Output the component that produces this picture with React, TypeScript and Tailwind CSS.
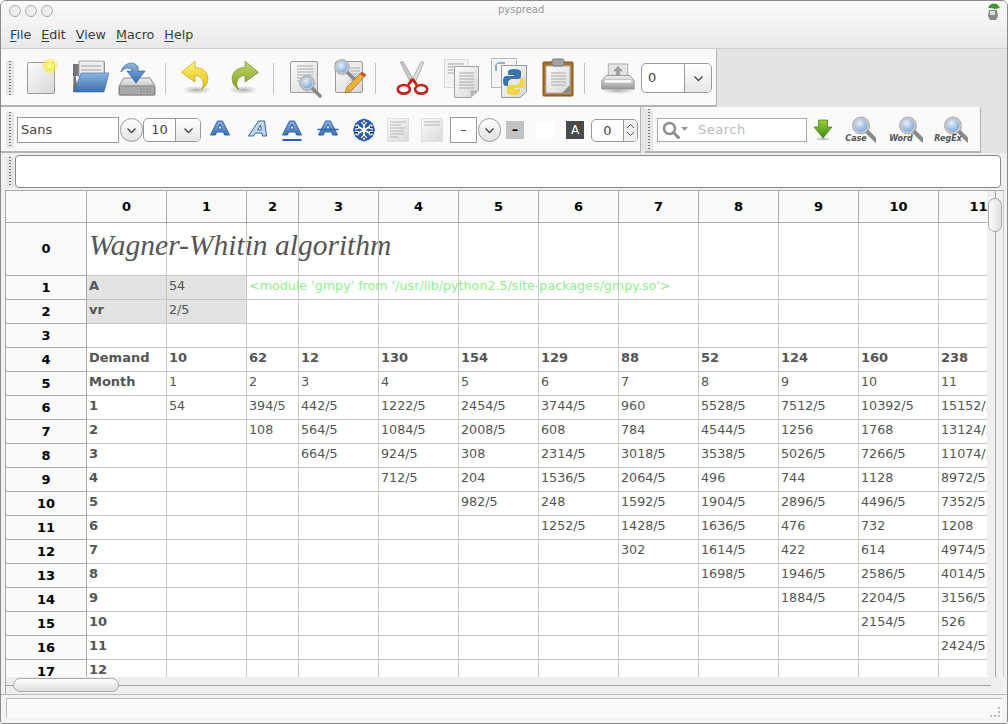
import React from "react";

const colWidths = [80, 80, 52, 80, 80, 80, 80, 80, 80, 80, 80, 80];

const rows: { h: string; cells: string[]; bold?: boolean }[] = [
  { h: "1", cells: ["A", "54", "<module 'gmpy' from '/usr/lib/python2.5/site-packages/gmpy.so'>"] },
  { h: "2", cells: ["vr", "2/5"] },
  { h: "3", cells: [] },
  { h: "4", bold: true, cells: ["Demand", "10", "62", "12", "130", "154", "129", "88", "52", "124", "160", "238"] },
  { h: "5", cells: ["Month", "1", "2", "3", "4", "5", "6", "7", "8", "9", "10", "11"] },
  { h: "6", cells: ["1", "54", "394/5", "442/5", "1222/5", "2454/5", "3744/5", "960", "5528/5", "7512/5", "10392/5", "15152/5"] },
  { h: "7", cells: ["2", "", "108", "564/5", "1084/5", "2008/5", "608", "784", "4544/5", "1256", "1768", "13124/5"] },
  { h: "8", cells: ["3", "", "", "664/5", "924/5", "308", "2314/5", "3018/5", "3538/5", "5026/5", "7266/5", "11074/5"] },
  { h: "9", cells: ["4", "", "", "", "712/5", "204", "1536/5", "2064/5", "496", "744", "1128", "8972/5"] },
  { h: "10", cells: ["5", "", "", "", "", "982/5", "248", "1592/5", "1904/5", "2896/5", "4496/5", "7352/5"] },
  { h: "11", cells: ["6", "", "", "", "", "", "1252/5", "1428/5", "1636/5", "476", "732", "1208"] },
  { h: "12", cells: ["7", "", "", "", "", "", "", "302", "1614/5", "422", "614", "4974/5"] },
  { h: "13", cells: ["8", "", "", "", "", "", "", "", "1698/5", "1946/5", "2586/5", "4014/5"] },
  { h: "14", cells: ["9", "", "", "", "", "", "", "", "", "1884/5", "2204/5", "3156/5"] },
  { h: "15", cells: ["10", "", "", "", "", "", "", "", "", "", "2154/5", "526"] },
  { h: "16", cells: ["11", "", "", "", "", "", "", "", "", "", "", "2424/5"] },
  { h: "17", cells: ["12"] },
];

function Defs() {
  return (
    <svg width="0" height="0" className="absolute">
      <defs>
        <linearGradient id="page" x1="0" y1="0" x2="1" y2="1">
          <stop offset="0" stopColor="#fbfbfb" />
          <stop offset="1" stopColor="#d8d8d8" />
        </linearGradient>
        <linearGradient id="blue" x1="0" y1="0" x2="0" y2="1">
          <stop offset="0" stopColor="#8db5e0" />
          <stop offset="1" stopColor="#3b6fb0" />
        </linearGradient>
        <linearGradient id="yellow" x1="0" y1="0" x2="0" y2="1">
          <stop offset="0" stopColor="#fff27a" />
          <stop offset="1" stopColor="#e3bf08" />
        </linearGradient>
        <linearGradient id="green" x1="0" y1="0" x2="0" y2="1">
          <stop offset="0" stopColor="#c4d868" />
          <stop offset="1" stopColor="#7f9f20" />
        </linearGradient>
        <linearGradient id="grey" x1="0" y1="0" x2="0" y2="1">
          <stop offset="0" stopColor="#f0f0f0" />
          <stop offset="1" stopColor="#9a9a9a" />
        </linearGradient>
        <linearGradient id="arrowg" x1="0" y1="0" x2="0" y2="1">
          <stop offset="0" stopColor="#9ad03c" />
          <stop offset="1" stopColor="#3f8a10" />
        </linearGradient>
        <radialGradient id="glow">
          <stop offset="0" stopColor="#fffde0" />
          <stop offset="0.4" stopColor="#fbf050" />
          <stop offset="1" stopColor="#f5e860" stopOpacity="0.3" />
        </radialGradient>
        <radialGradient id="lens" cx="0.4" cy="0.35">
          <stop offset="0" stopColor="#e6f0fb" />
          <stop offset="1" stopColor="#8fb4e0" />
        </radialGradient>
        <radialGradient id="shadow">
          <stop offset="0" stopColor="#000" stopOpacity="0.3" />
          <stop offset="1" stopColor="#000" stopOpacity="0" />
        </radialGradient>
      </defs>
    </svg>
  );
}

function Glass({ x, y, r }: { x: number; y: number; r: number }) {
  return (
    <g>
      <line x1={x + r * 0.7} y1={y + r * 0.7} x2={x + r * 2} y2={y + r * 2} stroke="#8a8a8a" strokeWidth={r * 0.55} strokeLinecap="round" />
      <circle cx={x} cy={y} r={r} fill="url(#lens)" stroke="#c8c8c8" strokeWidth={r * 0.28} />
      <circle cx={x} cy={y} r={r * 1.14} fill="none" stroke="#7d7d7d" strokeWidth="0.5" />
    </g>
  );
}

function Lines({ x, y, w, n, gap = 3 }: { x: number; y: number; w: number; n: number; gap?: number }) {
  return (
    <g stroke="#c0c0c0" strokeWidth="1.4">
      {Array.from({ length: n }).map((_, i) => (
        <line key={i} x1={x} x2={x + w} y1={y + i * gap} y2={y + i * gap} />
      ))}
    </g>
  );
}

const NewIcon = () => (
  <svg width="40" height="40" viewBox="0 0 40 40">
    <rect x="7.5" y="4.5" width="27" height="31" rx="1.5" fill="url(#page)" stroke="#9a9a9a" />
    <circle cx="30" cy="8" r="8" fill="url(#glow)" />
  </svg>
);

const OpenIcon = () => (
  <svg width="40" height="40" viewBox="0 0 40 40">
    <path d="M4 6h6l2-2h24v14H4z" fill="#77797a" />
    <path d="M10 3h25v16H10z" fill="#ededed" stroke="#a8a8a8" />
    <path d="M12 8h20M12 12h20" stroke="#bbb" strokeWidth="1.5" />
    <path d="M5 8l4 26h-5z" fill="#6d6f70" />
    <path d="M12 15h28l-5 19H5z" fill="url(#blue)" stroke="#3a6ba5" strokeWidth="0.6" />
  </svg>
);

const SaveIcon = () => (
  <svg width="40" height="40" viewBox="0 0 40 40">
    <path d="M7 20h26l5 8v9H2v-9z" fill="url(#grey)" stroke="#8b8b8b" />
    <rect x="2.5" y="28" width="35" height="9" rx="1.5" fill="#a9a9a9" stroke="#858585" />
    <path d="M24 30v5M27 30v5M30 30v5M33 30v5" stroke="#8a8a8a" />
    <path d="M4 14c2-9 13-12 17-5v4h7l-9 12-9-12h6c-2-4-9-4-12 1z" fill="url(#blue)" stroke="#2f5f9e" strokeWidth="0.7" />
  </svg>
);

const UndoIcon = () => (
  <svg width="32" height="36" viewBox="0 0 40 44">
    <ellipse cx="22" cy="37" rx="18" ry="5" fill="url(#shadow)" />
    <path d="M3 15L20 1v8c10 0 16 6 16 14 0 6-3 10-8 13 2-3 3-6 2-9-1-5-5-8-10-8v8z" fill="url(#yellow)" stroke="#b89c08" strokeWidth="0.8" strokeLinejoin="round" />
  </svg>
);

const RedoIcon = () => (
  <svg width="32" height="36" viewBox="0 0 40 44">
    <ellipse cx="18" cy="37" rx="18" ry="5" fill="url(#shadow)" />
    <path d="M37 15L20 1v8C10 9 4 15 4 23c0 6 3 10 8 13-2-3-3-6-2-9 1-5 5-8 10-8v8z" fill="url(#green)" stroke="#6d8a1a" strokeWidth="0.8" strokeLinejoin="round" />
  </svg>
);

const PreviewIcon = () => (
  <svg width="40" height="40" viewBox="0 0 40 40">
    <rect x="4.5" y="3.5" width="27" height="31" rx="1.5" fill="url(#page)" stroke="#9a9a9a" />
    <Lines x={11} y={8} w={16} n={6} />
    <Glass x={21} y={25} r={6.5} />
  </svg>
);

const EditIcon = () => (
  <svg width="40" height="40" viewBox="0 0 40 40">
    <rect x="5.5" y="3.5" width="27" height="31" rx="1.5" fill="url(#page)" stroke="#9a9a9a" />
    <Lines x={20} y={10} w={10} n={5} />
    <g transform="translate(-5 -1)">
      <Glass x={17} y={10} r={6.5} />
    </g>
    <path d="M32 14l4 3-15 16-6 2 2-6z" fill="#eab13c" stroke="#96661a" strokeWidth="0.7" />
    <path d="M32 14l4 3-2 2-4-3z" fill="#d9483b" />
  </svg>
);

const CutIcon = () => (
  <svg width="33" height="36" viewBox="0 0 38 40">
    <path d="M5 2l3-1 13 22-4 3z" fill="#c9c9c9" stroke="#8c8c8c" strokeWidth="0.7" />
    <path d="M29 1l3 1-10 24-4-3z" fill="#dedede" stroke="#8c8c8c" strokeWidth="0.7" />
    <g fill="none" stroke="#c4201c" strokeWidth="3">
      <ellipse cx="9" cy="33" rx="7" ry="5" />
      <ellipse cx="29" cy="33" rx="7" ry="5" />
      <path d="M14 28l5-7M24 28l-5-7" />
    </g>
  </svg>
);

const CopyIcon = () => (
  <svg width="40" height="40" viewBox="0 0 40 40">
    <rect x="3.500" y="1.500" width="24" height="28" fill="#f2f2f2" stroke="#dcdcdc" />
    <Lines x={7} y={6} w={16} n={4} />
    <path d="M13.500 8.500h24v24l-8 7h-16z" fill="url(#page)" stroke="#a0a0a0" />
    <Lines x={18} y={15} w={15} n={6} />
    <path d="M29.500 39.500v-7h8z" fill="#b8b8b8" />
  </svg>
);

const PythonIcon = () => (
  <svg width="40" height="40" viewBox="0 0 40 40">
    <rect x="1.500" y="0.500" width="25" height="29" fill="#f5f5f5" stroke="#b9b9b9" />
    <path d="M8 4h7v2h-8v7H5V7z" fill="#8fb0cc" />
    <path d="M11.500 7.500h25v26l-6 6h-19z" fill="url(#page)" stroke="#9a9a9a" />
    <path d="M24 11c-4 0-6 1-6 3v3h6v1h-8c-2 0-3 2-3 5s1 5 3 5h2v-3c0-2 2-4 4-4h6c2 0 3-1 3-3v-4c0-2-3-3-7-3z" fill="#3a76ad" />
    <path d="M24 37c4 0 6-1 6-3v-3h-6v-1h8c2 0 3-2 3-5s-1-5-3-5h-2v3c0 2-2 4-4 4h-6c-2 0-3 1-3 3v4c0 2 3 3 7 3z" fill="#f1d54a" />
  </svg>
);

const PasteIcon = () => (
  <svg width="40" height="40" viewBox="0 0 40 40">
    <rect x="5" y="4" width="30" height="34" rx="1" fill="#a9722c" stroke="#7c5218" />
    <rect x="8" y="8" width="24" height="27" fill="url(#page)" stroke="#b3b3b3" />
    <Lines x={13} y={15} w={15} n={5} />
    <path d="M24 35l8-8v8z" fill="#8a8a8a" />
    <rect x="14" y="1" width="12" height="7" rx="2" fill="#a2a2a2" stroke="#7a7a7a" />
  </svg>
);

const PrintIcon = () => (
  <svg width="34" height="34" viewBox="0 0 40 40">
    <ellipse cx="20" cy="35" rx="19" ry="4" fill="url(#shadow)" />
    <rect x="8.500" y="3.500" width="23" height="16" fill="#e4e4e4" stroke="#a5a5a5" />
    <path d="M20 6l6 6h-3.500v5h-5v-5H14z" fill="#9f9f9f" />
    <path d="M6 17h28l5 6v10H1V23z" fill="url(#grey)" stroke="#8e8e8e" />
    <rect x="4" y="22" width="32" height="4" rx="1" fill="#fff" stroke="#aaa" strokeWidth="0.7" />
  </svg>
);

function LetterA({ kind }: { kind: "bold" | "italic" | "under" | "strike" }) {
  const d = kind === "italic" ? "M2 16L12 1h6l2 15h-4l-.5-3H9l-2 3zM11 10h4L14 5z" : "M1 15L8 1h5l7 14h-5l-1-3H7l-1 3zM8.500 9h4L10.500 4z";
  return (
    <svg width="22" height="22" viewBox="0 0 21 22">
      <path d={d} fill={kind === "italic" ? "#c8d9ef" : "url(#blue)"} fillRule="evenodd" stroke="#2f62a8" strokeWidth="1" strokeLinejoin="round" />
      {kind === "under" && <path d="M1 20h19" stroke="#2f62a8" strokeWidth="2" />}
      {kind === "strike" && <path d="M0 9.500h21" stroke="#2f62a8" strokeWidth="1.600" />}
    </svg>
  );
}

const Snowflake = () => (
  <svg width="24" height="24" viewBox="0 0 24 24">
    <path d="M12 .5l5 1.700 4 3.500 2 6.300-2 6.300-4 3.500-5 1.700-5-1.700-4-3.500-2-6.300 2-6.300 4-3.500z" fill="#2a5ca8" />
    <g stroke="#fff" strokeWidth="1.700" strokeLinecap="round">
      <path d="M12 3v18M4.200 7.500l15.600 9M19.800 7.500l-15.600 9" />
      <path d="M9.500 4.500L12 7l2.500-2.500M9.500 19.500L12 17l2.500 2.500M3.500 11l3.200-1-.8-3.200M20.500 13l-3.200 1 .8 3.200M20.500 11l-3.200-1 .8-3.200M3.500 13l3.200 1-.8 3.200" strokeWidth="1.200" />
    </g>
  </svg>
);

const AlignLeft = () => (
  <svg width="22" height="24" viewBox="0 0 22 24">
    <rect x="0.500" y="0.500" width="21" height="23" fill="url(#page)" stroke="#e0e0e0" />
    <path d="M3 4h16M3 7h11M3 10h15M3 13h14M3 16h14M3 19h8" stroke="#b5b5b5" strokeWidth="1.200" />
  </svg>
);

const AlignTop = () => (
  <svg width="22" height="24" viewBox="0 0 22 24">
    <rect x="0.500" y="0.500" width="21" height="23" fill="url(#page)" stroke="#e0e0e0" />
    <path d="M3 4h16M3 7h16" stroke="#b5b5b5" strokeWidth="1.200" />
  </svg>
);

const Chevron = ({ w = 11 }: { w?: number }) => (
  <svg width={w} height="7" viewBox="0 0 11 7">
    <path d="M1.500 1.500l4 4 4-4" fill="none" stroke="#444" strokeWidth="1.300" />
  </svg>
);

const RoundBtn = () => (
  <div className="w-[23px] h-[24px] rounded-full border border-[#999] bg-gradient-to-b from-white to-[#e2e2e2] flex items-center justify-center">
    <Chevron />
  </div>
);

function FindIcon({ label, ml, labelLeft }: { label: string; ml: string; labelLeft: string }) {
  return (
    <div className={`relative w-[36px] h-[28px] ${ml}`}>
      <svg width="36" height="28" viewBox="0 0 36 28" className="absolute left-0 top-0">
        <g transform="translate(4 -1)">
          <Glass x={17} y={10.500} r={7.500} />
        </g>
      </svg>
      <span className={`absolute ${labelLeft} w-[44px] text-center top-[18px] text-[8px] leading-[10px] italic font-bold text-[#555]`}>{label}</span>
    </div>
  );
}

const Grip = ({ h }: { h: string }) => (
  <div className={`w-[8px] ${h} flex-none bg-[#e6e6e6] flex justify-center`}>
    <div className="w-[2px] h-full bg-[repeating-linear-gradient(to_bottom,#777_0,#777_1px,transparent_1px,transparent_3px)]" />
  </div>
);

const Sep = ({ ml, mr }: { ml: string; mr: string }) => <div className={`w-px h-[31px] bg-[#c4c4c4] ${ml} ${mr}`} />;

function Menu({ u, rest, ml }: { u: string; rest: string; ml: string }) {
  return (
    <span className={ml}>
      <span className="underline underline-offset-2">{u}</span>
      {rest}
    </span>
  );
}

function DataRow({ h, cells, bold, index }: { h: string; cells: string[]; bold?: boolean; index: number }) {
  return (
    <div className="flex h-[24px] flex-none">
      <div className="w-[81px] flex-none bg-[#fafafa] border-r border-b border-[#aaa] flex items-center justify-center font-bold text-black text-[13px] pt-[1px]">
        {h}
      </div>
      {colWidths.map((w, i) => {
        const grey = index < 2 && i < 2;
        const isBold = bold || i === 0;
        const isGreen = index === 0 && i === 2;
        return (
          <div
            key={i}
            style={{ width: w }}
            className={`flex-none border-r border-b border-[#c8c8c8] pl-[2px] leading-[19px] whitespace-nowrap ${grey ? "bg-[#e3e3e3]" : ""} ${isBold ? "font-bold text-[13px]" : "text-[12.7px]"} ${isGreen ? "text-[#90ee90]" : "text-[#555]"}`}
          >
            {cells[i] || ""}
          </div>
        );
      })}
    </div>
  );
}

export default function App() {
  return (
    <div className="w-[1008px] h-[724px] overflow-hidden bg-[#f2f2f2] border border-[#8a8a8a] rounded-t-[6px] rounded-b-[3px] flex flex-col font-['DejaVu_Sans',sans-serif] text-[#444] relative">
      <Defs />
      {/* title bar + menu */}
      <div className="h-[48px] flex-none flex flex-col bg-gradient-to-b from-[#fbfbfb] to-[#e9e9e9] border-b border-[#cfcfcf]">
        <div className="h-[20px] relative flex items-center pl-[8px] gap-[4px]">
          <div className="w-[12px] h-[12px] rounded-full border border-[#aaa] bg-[#eee]" />
          <div className="w-[12px] h-[12px] rounded-full border border-[#aaa] bg-[#eee]" />
          <div className="w-[12px] h-[12px] rounded-full border border-[#aaa] bg-[#eee]" />
          <span className="absolute left-[497px] top-[3px] text-[10px] leading-[12px] text-[#999]">pyspread</span>
          <svg width="16" height="20" viewBox="0 0 16 20" className="absolute right-[6px] top-[1px]">
            <path d="M3 6c1-4 6-6 10-3l2 3-5 1c-2-1-5-1-7-1z" fill="#3f9a2e" />
            <path d="M4 8h8l1 6-2 4H5l-2-4z" fill="#888" />
            <path d="M5 9h5v4H5z" fill="#ddd" />
          </svg>
        </div>
        <div className="flex items-center h-[26px] pt-[1px] pl-[9px] text-[12.7px] text-[#3c3c3c]">
          <Menu u="F" rest="ile" ml="" />
          <Menu u="E" rest="dit" ml="ml-[10px]" />
          <Menu u="V" rest="iew" ml="ml-[10px]" />
          <Menu u="M" rest="acro" ml="ml-[10px]" />
          <Menu u="H" rest="elp" ml="ml-[10px]" />
        </div>
      </div>

      {/* main toolbar */}
      <div className="h-[58px] flex-none bg-[#e4e4e4]">
        <div className="h-[58px] w-[716px] flex items-center pt-[2px] pl-[5px] bg-[#fafafa] border-r border-b-2 border-[#b4b4b4]">
          <Grip h="h-[34px]" />
          <div className="w-[48px] flex justify-center ml-[2px]"><NewIcon /></div>
          <div className="w-[48px] flex justify-center ml-[1px]"><OpenIcon /></div>
          <div className="w-[48px] flex justify-center"><SaveIcon /></div>
          <Sep ml="ml-[4px]" mr="mr-[5px]" />
          <div className="w-[48px] flex justify-center"><UndoIcon /></div>
          <div className="w-[48px] flex justify-center ml-[2px]"><RedoIcon /></div>
          <Sep ml="ml-[4px]" mr="mr-[8px]" />
          <div className="w-[48px] flex justify-center"><PreviewIcon /></div>
          <div className="w-[40px] flex justify-center"><EditIcon /></div>
          <Sep ml="ml-[5px]" mr="mr-[12px]" />
          <div className="w-[48px] flex justify-center"><CutIcon /></div>
          <div className="w-[48px] flex justify-center ml-[1px]"><CopyIcon /></div>
          <div className="w-[48px] flex justify-center ml-[1px]"><PythonIcon /></div>
          <div className="w-[48px] flex justify-center"><PasteIcon /></div>
          <Sep ml="ml-[2px]" mr="mr-[12px]" />
          <div className="w-[42px] flex justify-center"><PrintIcon /></div>
          <div className="ml-[2px] w-[71px] h-[30px] border border-[#999] rounded-[5px] flex overflow-hidden bg-white">
            <div className="flex-1 pl-[6px] text-[13px] leading-[28px]">0</div>
            <div className="w-[27px] border-l border-[#999] bg-gradient-to-b from-white to-[#e6e6e6] flex items-center justify-center"><Chevron w={13} /></div>
          </div>
        </div>
      </div>

      {/* format + search toolbars */}
      <div className="h-[46px] flex-none flex bg-[#e4e4e4]">
        <div className="w-[640px] h-[46px] flex items-center pt-[2px] pl-[5px] bg-[#fafafa] border-r border-b-2 border-[#b4b4b4]">
          <Grip h="h-[36px]" />
          <div className="w-[102px] h-[26px] ml-[3px] border border-[#999] bg-white pl-[3px] text-[13px] leading-[24px]">Sans</div>
          <div className="ml-[1px]"><RoundBtn /></div>
          <div className="w-[58px] h-[24px] border border-[#999] rounded-[5px] flex overflow-hidden bg-white">
            <div className="w-[32px] border-r border-[#999] text-center text-[13px] leading-[22px]">10</div>
            <div className="flex-1 bg-gradient-to-b from-white to-[#e6e6e6] flex items-center justify-center"><Chevron /></div>
          </div>
          <div className="ml-[8px] w-[22px] mt-[2px]"><LetterA kind="bold" /></div>
          <div className="ml-[15px] w-[22px] mt-[2px]"><LetterA kind="italic" /></div>
          <div className="ml-[13px] w-[22px] mt-[2px]"><LetterA kind="under" /></div>
          <div className="ml-[14px] w-[22px] mt-[2px]"><LetterA kind="strike" /></div>
          <div className="ml-[13px] w-[24px]"><Snowflake /></div>
          <div className="ml-[11px] w-[22px]"><AlignLeft /></div>
          <div className="ml-[12px] w-[22px]"><AlignTop /></div>
          <div className="ml-[7px] w-[27px] h-[26px] border border-[#999] bg-white flex items-center justify-center text-[13px]">–</div>
          <div className="ml-[1px]"><RoundBtn /></div>
          <div className="ml-[5px] w-[18px] h-[18px] bg-[#c2c2c2] flex items-center justify-center text-black text-[13px] font-bold">–</div>
          <div className="ml-[12px] w-[18px] h-[18px] bg-white" />
          <div className="ml-[12px] w-[18px] h-[18px] bg-[#4a4a4a] flex items-center justify-center text-white text-[12px]">A</div>
          <div className="ml-[7px] w-[47px] h-[23px] border border-[#999] rounded-[5px] flex overflow-hidden bg-white">
            <div className="flex-1 text-center text-[13px] leading-[21px]">0</div>
            <div className="w-[14px] border-l border-[#999] bg-[#f2f2f2] flex flex-col items-center justify-center gap-[2px]">
              <svg width="9" height="6" viewBox="0 0 9 6"><path d="M1 5l3.500-3.500L8 5" fill="none" stroke="#555" /></svg>
              <svg width="9" height="6" viewBox="0 0 9 6"><path d="M1 1l3.500 3.500L8 1" fill="none" stroke="#555" /></svg>
            </div>
          </div>
        </div>
        <div className="w-[336px] h-[46px] ml-[4px] flex items-center pt-[1px] bg-[#fafafa] border-r border-b-2 border-[#b4b4b4]">
          <Grip h="h-[42px]" />
          <div className="ml-[4px] w-[150px] h-[24px] border border-[#aaa] bg-white flex items-center pl-[4px]">
            <svg width="30" height="18" viewBox="0 0 30 18">
              <circle cx="7.500" cy="7.500" r="5.500" fill="none" stroke="#8e8e8e" strokeWidth="2.500" />
              <path d="M11.500 11.500l5 5" stroke="#8e8e8e" strokeWidth="3" strokeLinecap="round" />
              <path d="M19 6h7l-3.500 4z" fill="#999" />
            </svg>
            <span className="ml-[6px] text-[13px] text-[#bbb] tracking-[0.5px]">Search</span>
          </div>
          <svg width="20" height="24" viewBox="0 0 20 24" className="ml-[6px]">
            <ellipse cx="10" cy="21" rx="9" ry="2" fill="url(#shadow)" />
            <path d="M5.500 2h9v7H19l-9 11-9-11h4.500z" fill="url(#arrowg)" stroke="#3c7a10" strokeWidth="0.7" />
          </svg>
          <FindIcon label="Case" ml="ml-[7px]" labelLeft="left-[-6px]" />
          <FindIcon label="Word" ml="ml-[11px]" labelLeft="left-[-8px]" />
          <FindIcon label="RegEx" ml="ml-[9px]" labelLeft="left-[-6px]" />
        </div>
      </div>

      {/* entry line */}
      <div className="h-[37px] flex-none flex items-center pl-[5px] bg-[#f0f0f0]">
        <Grip h="h-[30px]" />
        <div className="ml-[1px] w-[986px] h-[33px] border border-[#888] rounded-[4px] bg-white" />
      </div>

      {/* grid + scrollbars */}
      <div className="flex-none h-[487px] ml-[4px] w-[999px] flex border-t border-l border-r border-t-[#aaa] border-l-[#aaa] border-r-[#ccc]">
        <div className="w-[981px] flex-none overflow-hidden bg-white flex flex-col">
          <div className="flex h-[32px] flex-none">
            <div className="w-[81px] flex-none bg-[#fafafa] border-r border-b border-[#aaa]" />
            {colWidths.map((w, i) => (
              <div key={i} style={{ width: w }} className="flex-none bg-[#fafafa] border-r border-b border-[#aaa] flex items-center justify-center font-bold text-black text-[13px]">
                {i}
              </div>
            ))}
          </div>
          <div className="flex h-[53px] flex-none">
            <div className="w-[81px] flex-none bg-[#fafafa] border-r border-b border-[#aaa] flex items-center justify-center font-bold text-black text-[13px]">0</div>
            {colWidths.map((w, i) => (
              <div key={i} style={{ width: w }} className="flex-none border-r border-b border-[#c8c8c8] pl-[2px] whitespace-nowrap">
                {i === 0 && <span className="font-['Liberation_Serif',serif] italic text-[29.5px] leading-[44px] text-[#555]">Wagner-Whitin algorithm</span>}
              </div>
            ))}
          </div>
          {rows.map((r, i) => (
            <DataRow key={r.h} h={r.h} cells={r.cells} bold={r.bold} index={i} />
          ))}
        </div>
        <div className="w-[16px] flex-none bg-[#f0f0f0] rounded-b-[8px] relative flex justify-center">
          <div className="w-px h-full bg-[#a5a5a5]" />
          <div className="absolute top-[7px] left-[1px] w-[14px] h-[34px] rounded-full border border-[#aaa] bg-gradient-to-r from-white to-[#dedede]" />
        </div>
      </div>
      <div className="flex-none h-[17px] mx-[4px] bg-[#eeeeee] rounded-r-[8px] border-l border-[#aaa] relative flex items-center pr-[12px]">
        <div className="w-full h-px bg-[#a5a5a5]" />
        <div className="absolute left-[7px] top-[1px] h-[14px] w-[106px] rounded-full border border-[#aaa] bg-gradient-to-b from-white to-[#dedede]" />
      </div>

      {/* status bar */}
      <div className="flex-1 flex px-[5px] pt-[3px] pb-[5px] bg-[#f4f4f4] border-t border-[#bbb]">
        <div className="flex-1 border-t border-l border-[#bbb] bg-[#fafafa] relative">
          <div className="absolute right-[2px] bottom-[1px] w-[10px] h-[10px] border-r-2 border-b-2 border-dotted border-[#bbb]" />
        </div>
      </div>
    </div>
  );
}
